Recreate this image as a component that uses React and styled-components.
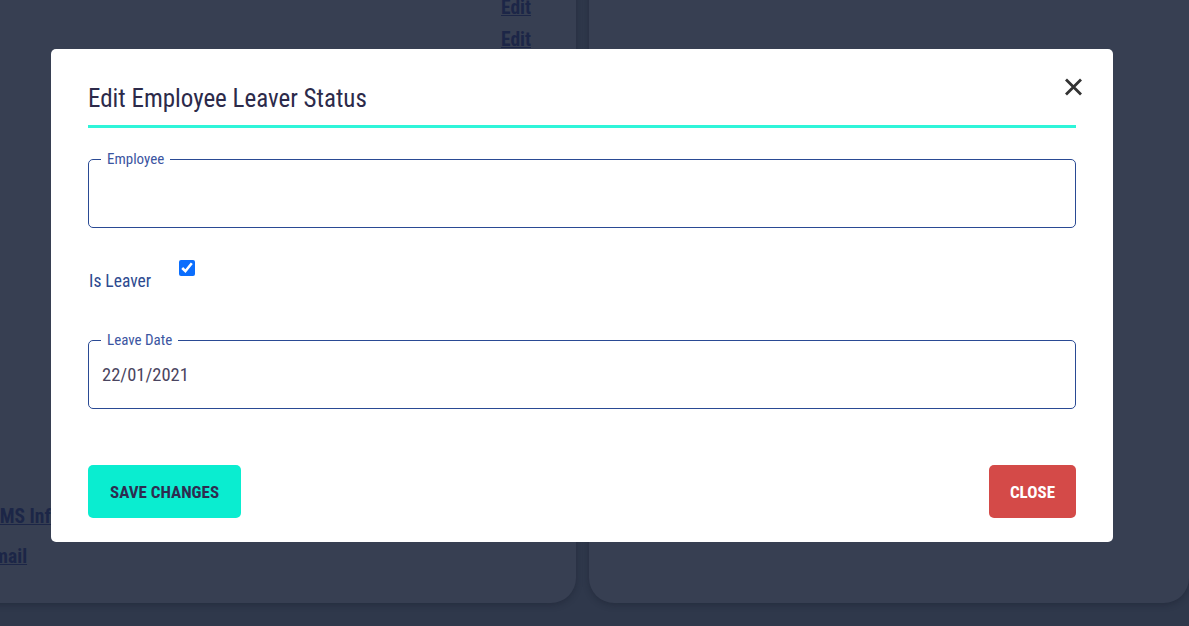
import React from "react";
import styled, { createGlobalStyle } from "styled-components";

const GlobalStyle = createGlobalStyle`
  html, body {
    margin: 0;
    padding: 0;
    height: 100%;
    overflow: hidden;
    background: #2f384b;
    font-family: "Roboto Condensed", Roboto, "Liberation Sans", sans-serif;
  }
`;

const Page = styled.div`
  height: 626px;
  overflow: hidden;
  padding-bottom: 23px;
  box-sizing: border-box;
`;

const Columns = styled.div`
  display: flex;
  gap: 13px;
  height: 633px;
  margin: -30px 0 0 -30px;
`;

const Card = styled.div`
  flex: ${(props) => (props.grow ? 1 : "none")};
  width: ${(props) => (props.grow ? "auto" : "606px")};
  background: #373f52;
  border-radius: 0 0 25px 25px;
  box-shadow: 0 2px 6px rgba(20, 25, 40, 0.35);
  display: flex;
  flex-direction: column;
  justify-content: space-between;
  padding: 26px 45px 35px 0;
  box-sizing: border-box;
`;

const LinkColumn = styled.div`
  display: flex;
  flex-direction: column;
  align-items: flex-end;
  gap: 9px;
`;

const FaintLink = styled.a`
  color: #1c2647;
  font-weight: 700;
  font-size: 19.5px;
  line-height: 23px;
  text-decoration: underline;
  white-space: nowrap;
  margin-left: ${(props) => props.shift || 0}px;
`;

const FooterLinks = styled.div`
  display: flex;
  flex-direction: column;
  align-items: flex-start;
  gap: 17px;
  margin-left: 14px;
`;

const Overlay = styled.div`
  position: fixed;
  inset: 0;
  padding: 49px 76px 0 51px;
`;

const Modal = styled.div`
  position: relative;
  background: #fff;
  border-radius: 5px;
  padding: 0 37px 24px 37px;
  box-sizing: border-box;
  height: 493px;
  display: flex;
  flex-direction: column;
`;

const Header = styled.div`
  padding-top: 36px;
  padding-bottom: 12px;
  border-bottom: 3px solid #2ef5d9;
`;

const Title = styled.h2`
  margin: 0;
  font-size: 25px;
  font-weight: 400;
  line-height: 28px;
  color: #2c2a4a;
`;

const CloseIcon = styled.button`
  position: absolute;
  top: 29px;
  right: 30px;
  width: 19px;
  height: 18px;
  padding: 0;
  border: 0;
  background: none;
  cursor: pointer;
  display: flex;
`;

const Field = styled.fieldset`
  margin: ${(props) => props.top}px 0 0 0;
  padding: 0 12px 5px 12px;
  border: 1px solid #2a4a94;
  border-radius: 5px;
`;

const Legend = styled.legend`
  padding: 0 6px;
  font-size: 15px;
  line-height: 15px;
  color: #3b55a1;
`;

const FieldValue = styled.div`
  height: 55px;
  line-height: 55px;
  font-size: 18.5px;
  color: #4a4560;
  padding-left: 1px;
`;

const LeaverRow = styled.div`
  margin-top: 32px;
  display: flex;
  align-items: flex-start;
`;

const LeaverLabel = styled.label`
  width: 91px;
  padding-top: 11px;
  font-size: 17.5px;
  line-height: 20px;
  color: #2d4a8f;
  padding-left: 1px;
  box-sizing: border-box;
`;

const Check = styled.input`
  margin: 0;
  width: 16px;
  height: 16px;
  accent-color: #0b6efd;
`;

const Footer = styled.div`
  margin-top: auto;
  display: flex;
  justify-content: space-between;
`;

const Button = styled.button`
  height: 53px;
  padding: 0 ${(props) => props.pad}px;
  border: 0;
  border-radius: 5px;
  background: ${(props) => props.bg};
  color: ${(props) => props.fg};
  font-family: inherit;
  font-size: 17px;
  font-weight: 700;
  text-transform: uppercase;
  cursor: pointer;
`;

function App() {
  return (
    <>
      <GlobalStyle />
      <Page>
        <Columns>
          <Card>
            <LinkColumn>
              <FaintLink>Edit</FaintLink>
              <FaintLink>Edit</FaintLink>
            </LinkColumn>
            <FooterLinks>
              <FaintLink shift={-7}>HRMS Info</FaintLink>
              <FaintLink>Email</FaintLink>
            </FooterLinks>
          </Card>
          <Card grow />
        </Columns>
      </Page>

      <Overlay>
        <Modal>
          <Header>
            <Title>Edit Employee Leaver Status</Title>
          </Header>
          <CloseIcon aria-label="close">
            <svg width="19" height="18" viewBox="0 0 19 18">
              <path d="M2 1.5 L17 16.5 M17 1.5 L2 16.5" stroke="#333" strokeWidth="2.8" fill="none" />
            </svg>
          </CloseIcon>

          <Field top={24}>
            <Legend>Employee</Legend>
            <FieldValue />
          </Field>

          <LeaverRow>
            <LeaverLabel htmlFor="isLeaver">Is Leaver</LeaverLabel>
            <Check id="isLeaver" type="checkbox" defaultChecked />
          </LeaverRow>

          <Field top={42}>
            <Legend>Leave Date</Legend>
            <FieldValue>22/01/2021</FieldValue>
          </Field>

          <Footer>
            <Button bg="#0aedd0" fg="#2e2c50" pad={22}>
              Save Changes
            </Button>
            <Button bg="#d44a48" fg="#fff" pad={21}>
              Close
            </Button>
          </Footer>
        </Modal>
      </Overlay>
    </>
  );
}

export default App;
